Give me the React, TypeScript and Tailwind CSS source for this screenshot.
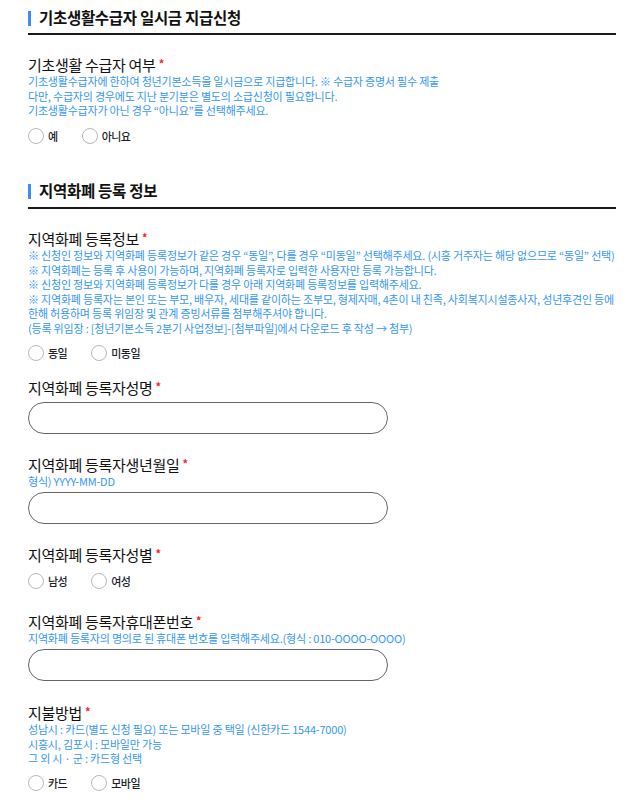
import React from 'react';

const blue = 'text-[#3597f7]';

const SectionTitle = ({ title, className = '' }: { title: string; className?: string }) => (
  <div className={`border-b-2 border-[#1a1a1a] ${className}`}>
    <h2 className="flex h-6 items-center text-[15.5px] font-bold tracking-[-0.3px] text-[#111]">
      <span className="mr-[8px] inline-block h-[15px] w-[3px] bg-[#3b8ff0]" />
      {title}
    </h2>
  </div>
);

const Label = ({ text }: { text: string }) => (
  <div className="flex h-[18px] items-center text-[15px] leading-[18px] tracking-[-0.3px] text-[#111]">
    {text}
    <span className="ml-[3px] -mt-[4px] text-[11px] font-bold text-[#ff1a1a]">*</span>
  </div>
);

const Help = ({ lines }: { lines: string[] }) => (
  <div className={`text-[11px] leading-[14.5px] tracking-[-0.2px] ${blue}`}>
    {lines.map((l) => (
      <p key={l}>{l}</p>
    ))}
  </div>
);

const Radios = ({ name, options, className = '' }: { name: string; options: string[]; className?: string }) => (
  <div className={`flex items-center gap-[24px] ${className}`}>
    {options.map((o) => (
      <label key={o} className="flex items-center gap-[4px]">
        <input type="radio" name={name} className="sr-only" />
        <span className="h-[16px] w-[16px] rounded-full border border-[#b8b8b8] bg-white" />
        <span className="text-[11px] font-medium tracking-[-0.5px] text-[#1d1d2b]">{o}</span>
      </label>
    ))}
  </div>
);

const TextInput = ({ className = '' }: { className?: string }) => (
  <input
    type="text"
    className={`block h-[32px] w-[360px] rounded-full border border-[#666] bg-white px-4 text-[13px] outline-none ${className}`}
  />
);

export default function App() {
  return (
    <div
      className="min-h-screen bg-white px-[28px] pt-[6px]"
      style={{ fontFamily: '"Noto Sans CJK KR", "Noto Sans", sans-serif' }}
    >
      <SectionTitle title="기초생활수급자 일시금 지급신청" className="pb-[3px]" />

      <div className="mt-[21px]">
        <Label text="기초생활 수급자 여부" />
        <Help
          lines={[
            '기초생활수급자에 한하여 청년기본소득을 일시금으로 지급합니다. ※ 수급자 증명서 필수 제출',
            '다만, 수급자의 경우에도 지난 분기분은 별도의 소급신청이 필요합니다.',
            '기초생활수급자가 아닌 경우 “아니요”를 선택해주세요.',
          ]}
        />
        <Radios name="basic" options={['예', '아니요']} className="mt-[10px]" />
      </div>

      <SectionTitle title="지역화폐 등록 정보" className="mt-[35px] pb-[4px]" />

      <div className="mt-[21px]">
        <Label text="지역화폐 등록정보" />
        <Help
          lines={[
            '※ 신청인 정보와 지역화폐 등록정보가 같은 경우 “동일”, 다를 경우 “미동일” 선택해주세요. (시흥 거주자는 해당 없으므로 “동일” 선택)',
            '※ 지역화폐는 등록 후 사용이 가능하며, 지역화폐 등록자로 입력한 사용자만 등록 가능합니다.',
            '※ 신청인 정보와 지역화폐 등록정보가 다를 경우 아래 지역화폐 등록정보를 입력해주세요.',
            '※ 지역화폐 등록자는 본인 또는 부모, 배우자, 세대를 같이하는 조부모, 형제자매, 4촌이 내 친족, 사회복지시설종사자, 성년후견인 등에',
            '한해 허용하며 등록 위임장 및 관계 증빙서류를 첨부해주셔야 합니다.',
            '(등록 위임장 : [청년기본소득 2분기 사업정보]-[첨부파일]에서 다운로드 후 작성 → 첨부)',
          ]}
        />
        <Radios name="same" options={['동일', '미동일']} className="mt-[10px]" />
      </div>

      <div className="mt-[17px]">
        <Label text="지역화폐 등록자성명" />
        <TextInput className="mt-[5px]" />
      </div>

      <div className="mt-[22px]">
        <Label text="지역화폐 등록자생년월일" />
        <Help lines={['형식) YYYY-MM-DD']} />
        <TextInput className="mt-[4px]" />
      </div>

      <div className="mt-[22px]">
        <Label text="지역화폐 등록자성별" />
        <Radios name="gender" options={['남성', '여성']} className="mt-[9px]" />
      </div>

      <div className="mt-[23px]">
        <Label text="지역화폐 등록자휴대폰번호" />
        <Help lines={['지역화폐 등록자의 명의로 된 휴대폰 번호를 입력해주세요.(형식 : 010-OOOO-OOOO)']} />
        <TextInput className="mt-[4px]" />
      </div>

      <div className="mt-[23px] pb-6">
        <Label text="지불방법" />
        <Help
          lines={[
            '성남시 : 카드(별도 신청 필요) 또는 모바일 중 택일 (신한카드 1544-7000)',
            '시흥시, 김포시 : 모바일만 가능',
            '그 외 시 · 군 : 카드형 선택',
          ]}
        />
        <Radios name="pay" options={['카드', '모바일']} className="mt-[9px]" />
      </div>
    </div>
  );
}
